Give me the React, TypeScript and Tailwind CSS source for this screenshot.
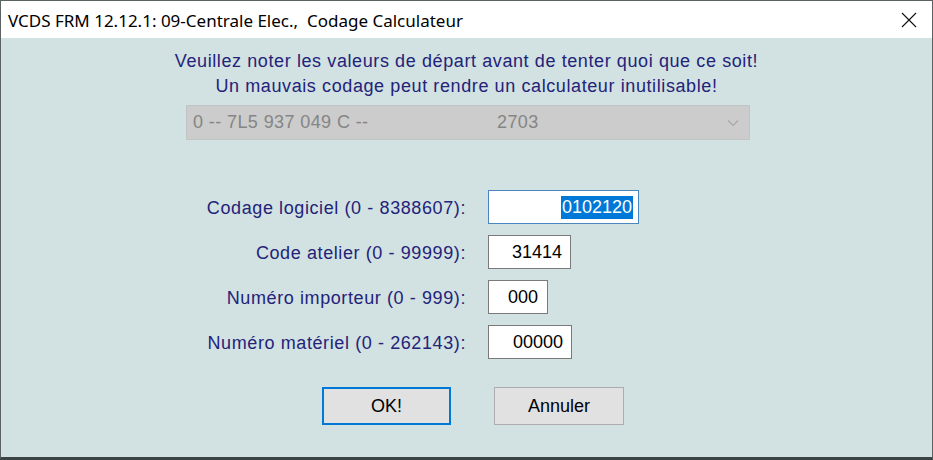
import React from "react";

const rows = [
  { label: "Codage logiciel (0 - 8388607):", value: "0102120", w: "w-[151px]", pr: "pr-[5px]", active: true },
  { label: "Code atelier (0 - 99999):", value: "31414", w: "w-[83px]", pr: "pr-[8px]", active: false },
  { label: "Numéro importeur (0 - 999):", value: "000", w: "w-[60px]", pr: "pr-[9px]", active: false },
  { label: "Numéro matériel (0 - 262143):", value: "00000", w: "w-[84px]", pr: "pr-[8px]", active: false },
];

export default function App() {
  return (
    <div
      className="w-[933px] h-[460px] flex flex-col border border-[#5b6262] border-b-[3px] border-b-[#3b4444] overflow-hidden"
      style={{ fontFamily: '"Liberation Sans", Arial, sans-serif' }}
    >
      <div className="h-[37px] shrink-0 bg-white flex items-center justify-between pl-[7px] pr-[15px]">
        <span
          className="text-[17px] text-black leading-none pt-[1px]"
          style={{ fontFamily: '"Noto Sans", "Open Sans", sans-serif' }}
        >
          VCDS FRM 12.12.1: 09-Centrale Elec.,&nbsp; Codage Calculateur
        </span>
        <svg width="16" height="16" viewBox="0 0 16 16" className="mt-[1px]">
          <path d="M1 1 L15 15 M15 1 L1 15" stroke="#111" strokeWidth="1.1" fill="none" />
        </svg>
      </div>
      <div className="flex-1 bg-[#d2e1e1] flex flex-col items-center pt-[11px]">
        <div className="text-[18px] tracking-[0.6px] leading-[25px] text-[#23237a] text-center">
          <div>Veuillez noter les valeurs de départ avant de tenter quoi que ce soit!</div>
          <div>Un mauvais codage peut rendre un calculateur inutilisable!</div>
        </div>
        <div className="mt-[6px] w-[564px] h-[35px] bg-[#cccccc] border border-[#c0c4c4] flex items-center pl-[6px] pr-[10px] text-[18px] tracking-[0.4px] text-[#858585] ml-[3px]">
          <span className="w-[304px]">0 -- 7L5 937 049 C --</span>
          <span className="flex-1">2703</span>
          <svg width="12" height="8" viewBox="0 0 12 8">
            <path d="M1 1.5 L6 6.5 L11 1.5" stroke="#a8a8a8" strokeWidth="1.2" fill="none" />
          </svg>
        </div>
        <div className="mt-[50px] grid grid-cols-[465px_auto] gap-x-[22px] gap-y-[11px] self-start items-center">
          {rows.map((r) => (
            <React.Fragment key={r.label}>
              <div className="text-right text-[18px] tracking-[0.6px] text-[#23237a] pt-[2px]">{r.label}</div>
              <div
                className={`${r.w} h-[34px] bg-white flex items-center justify-end ${r.pr} text-[18px] text-black ${
                  r.active ? "border border-[#4a87c0]" : "border border-[#7a7a7a]"
                }`}
              >
                {r.active ? (
                  <span className="bg-[#0078d7] text-white leading-[23px] px-[1px]">{r.value}</span>
                ) : (
                  <span>{r.value}</span>
                )}
              </div>
            </React.Fragment>
          ))}
        </div>
        <div className="mt-[28px] flex gap-[43px] self-start ml-[321px]">
          <button className="w-[129px] h-[38px] bg-[#e1e1e1] border-2 border-[#0078d7] text-[18px] text-black">
            OK!
          </button>
          <button className="w-[130px] h-[38px] bg-[#e1e1e1] border border-[#adadad] text-[18px] text-black">
            Annuler
          </button>
        </div>
      </div>
    </div>
  );
}
